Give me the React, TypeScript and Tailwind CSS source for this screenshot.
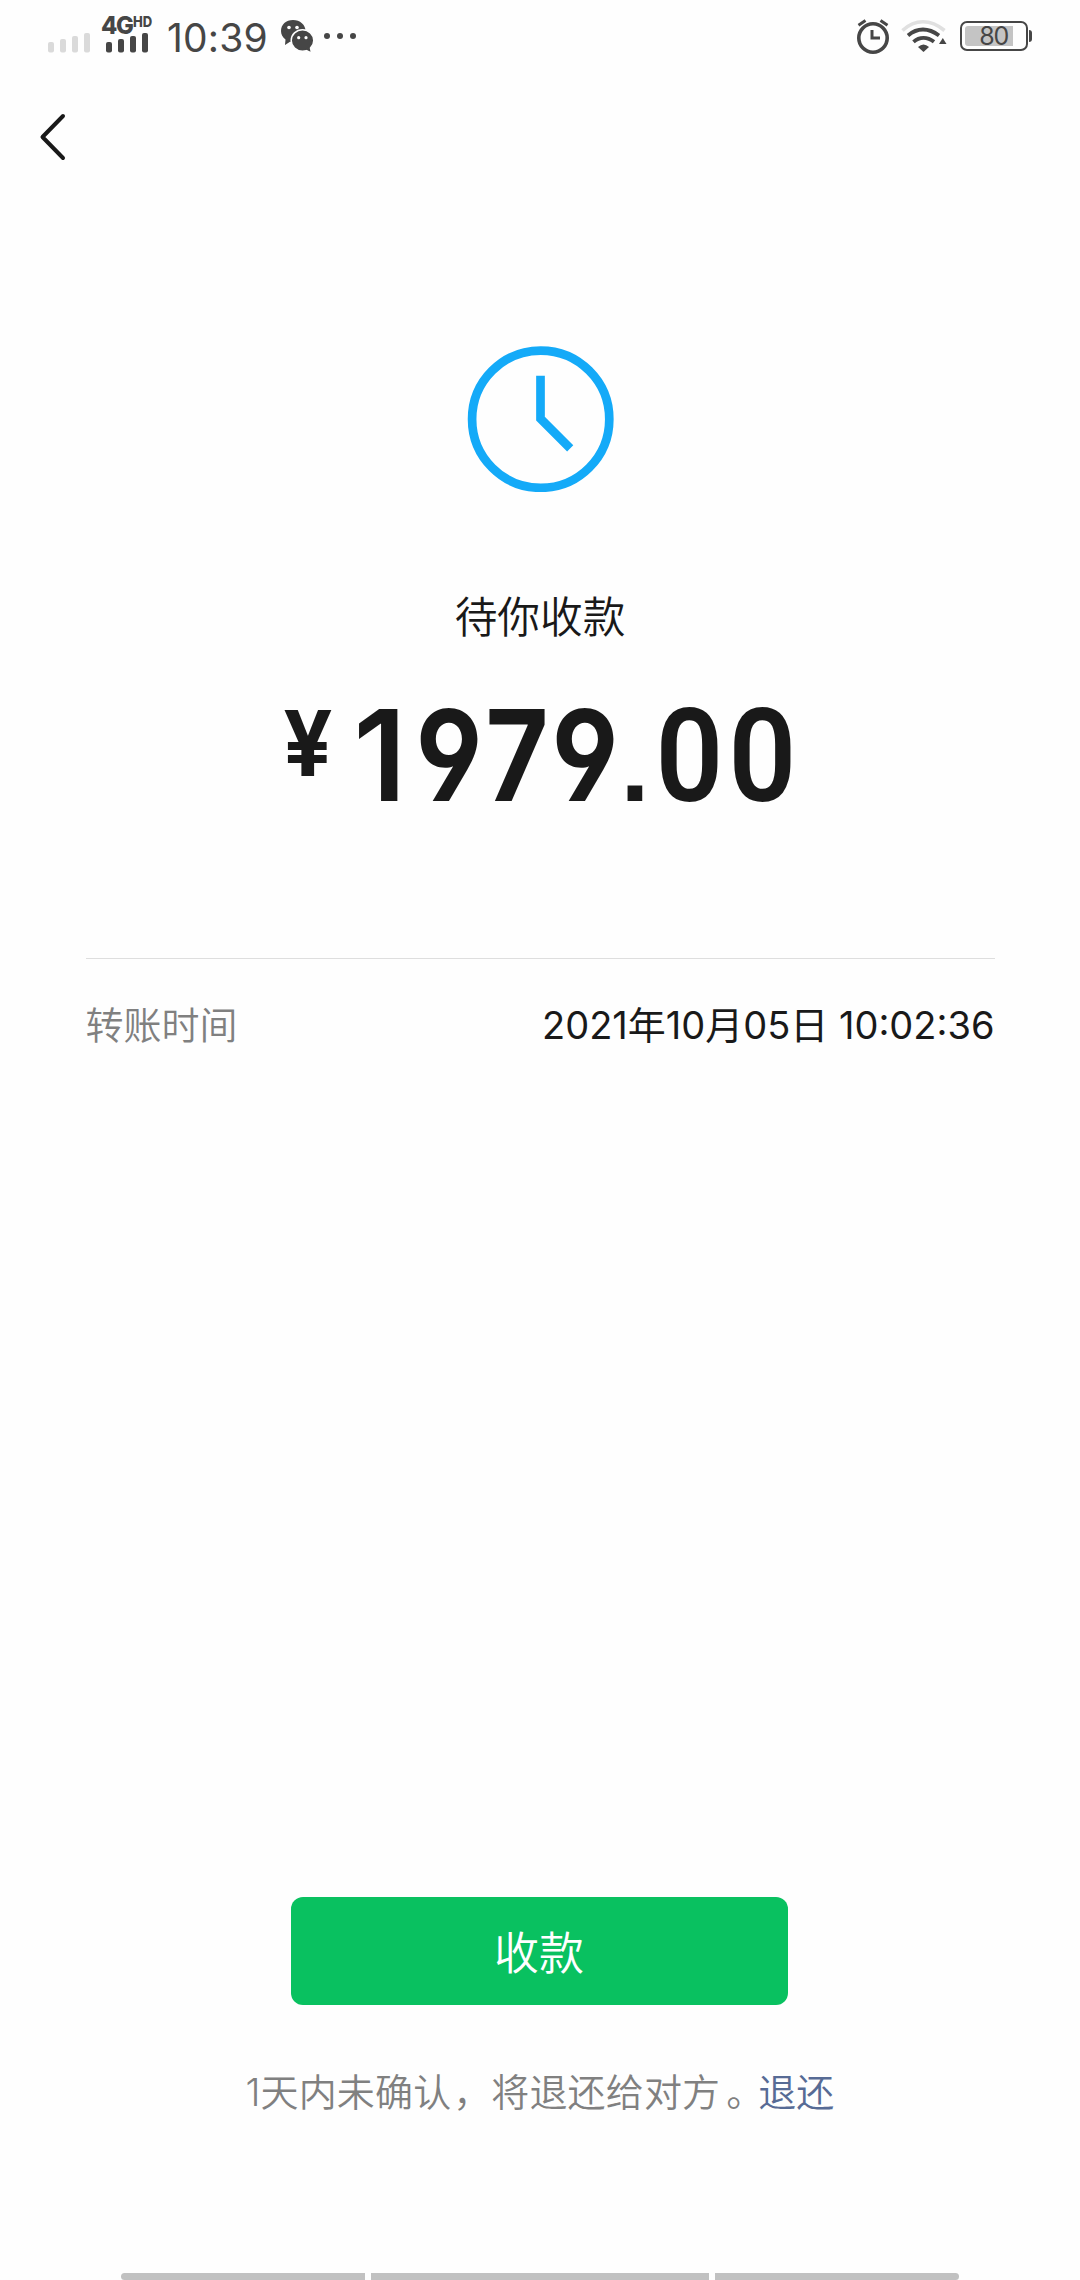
const SANS = "font-['Inter','Noto_Sans_CJK_SC',sans-serif]";

const SignalBars = ({ className }: { className: string }) => (
  <svg width="44" height="20" viewBox="0 0 44 20" className={className} fill="currentColor">
    <rect x="0" y="9" width="6" height="10.5" rx="2" />
    <rect x="12" y="6" width="6" height="13.5" rx="2" />
    <rect x="24" y="3" width="6" height="16.5" rx="2" />
    <rect x="36" y="0" width="6" height="19.5" rx="2" />
  </svg>
);

const WechatIcon = () => (
  <svg width="34" height="34" viewBox="0 0 34 34" className="ml-[13px] mt-[19px]">
    <path
      d="M13 1C6 1 1 5.600 1 12c0 3.600 1.700 6.400 4.500 8.500L5 26l5-3.200c1 .2 2 .3 3 .3 7 0 12.500-4.600 12.500-11S20 1 13 1z"
      fill="#464646"
    />
    <ellipse cx="22.500" cy="21.500" rx="11.300" ry="10.800" fill="#464646" stroke="#fefefe" strokeWidth="1.500" />
    <path d="M25 30l5.500 2.800-1-5z" fill="#464646" />
    <circle cx="9" cy="8.500" r="1.800" fill="#fefefe" />
    <circle cx="17" cy="8.500" r="1.800" fill="#fefefe" />
    <circle cx="18.700" cy="18.700" r="1.600" fill="#fefefe" />
    <circle cx="26" cy="18.700" r="1.600" fill="#fefefe" />
  </svg>
);

const AlarmIcon = () => (
  <svg width="34" height="36" viewBox="0 0 34 36" className="mt-[18px]" fill="none" stroke="#464646">
    <circle cx="17" cy="20" r="14.200" strokeWidth="3.600" />
    <path d="M16 12v8h8" strokeWidth="3" />
    <path d="M2.500 7.200l7-4.700M31.500 7.200l-7-4.700" strokeWidth="3" />
  </svg>
);

const WifiIcon = () => (
  <svg width="46" height="36" viewBox="0 0 46 36" className="ml-[11px] mt-[18px]" fill="none">
    <path d="M1.500 12.500Q11 3.800 22 3.800T43.500 12.500" stroke="#e0e0e0" strokeWidth="3.600" />
    <path d="M7 17.500Q14 11.500 22 11.500T38 17.500" stroke="#464646" strokeWidth="3.800" />
    <path d="M12.500 23.800Q17 19.800 22.500 19.800T33 23.800" stroke="#464646" strokeWidth="3.800" />
    <path d="M17 29Q22.500 24 28 29L22.500 34z" fill="#464646" />
    <path d="M38 26h7.500l-3.700-6z" fill="#464646" />
  </svg>
);

const StatusBar = () => (
  <div className="flex h-[74px] items-start pl-12 pr-[48px] text-[#464646]">
    <SignalBars className="mt-[33px] text-[#dadada]" />
    <div className="ml-[9px] mt-[14px] flex w-[61px] flex-col">
      <div className="flex h-[19px] items-start font-extrabold">
        <span className="w-[32px] origin-left scale-x-[0.95] text-[25px] leading-[23px] tracking-[-1.5px]">4G</span>
        <span className="origin-left scale-x-90 text-[14.500px] leading-[16px]">HD</span>
      </div>
      <SignalBars className="ml-[5px]" />
    </div>
    <span className="ml-[5px] mt-[14px] w-[100px] whitespace-nowrap text-[39px] leading-[48px] tracking-[0.2px]">10:39</span>
    <WechatIcon />
    <svg width="34" height="8" viewBox="0 0 34 8" className="ml-[9px] mt-[32px]" fill="currentColor">
      <circle cx="4" cy="4" r="3" />
      <circle cx="17" cy="4" r="3" />
      <circle cx="30" cy="4" r="3" />
    </svg>
    <div className="ml-auto flex items-start">
      <AlarmIcon />
      <WifiIcon />
      <div className="ml-[13px] mt-[21px] flex h-[30px] w-[68px] items-center rounded-[7px] border-2 border-[#464646] px-[3px]">
        <div className="flex h-5 w-12 items-center justify-end rounded-l-[3px] bg-[#c4c4c4] pr-[5px] text-[25px] leading-5 tracking-[-1.2px]">
          80
        </div>
      </div>
      <div className="ml-px mt-[30px] h-3 w-[3px] rounded-r-full bg-[#464646]" />
    </div>
  </div>
);

const ClockIcon = () => (
  <svg width="148" height="146" viewBox="0 0 148 146" fill="none" stroke="#14aaf8" strokeWidth="8.700">
    <circle cx="74.700" cy="73.200" r="68.600" />
    <path d="M74.500 29.700v43L104.200 102.300" />
  </svg>
);

// each glyph sits in its own cell, condensed to a DIN-like width
const DIGITS = [
  { char: "1", className: "w-[62px] -translate-x-[5px] font-semibold" },
  { char: "9", className: "w-[68px] -translate-x-px scale-x-[0.86] font-bold" },
  { char: "7", className: "w-[66px] scale-x-[0.86] font-bold" },
  { char: "9", className: "w-[70px] scale-x-[0.86] font-bold" },
  { char: ".", className: "w-[30px] font-['Liberation_Sans'] text-[104px] font-bold" },
  { char: "0", className: "w-[79px] scale-x-[0.92] font-['Roboto'] text-[129px] font-semibold" },
  { char: "0", className: "w-[67px] scale-x-[0.92] font-['Roboto'] text-[129px] font-semibold" },
];

const Amount = () => (
  <div className="flex h-[140px] w-[512px] items-baseline leading-[140px] text-[#191919]">
    <span className="flex w-12 -translate-y-[25px] scale-x-[0.95] justify-center text-[91px] font-bold">¥</span>
    <span className="ml-[22px] flex items-baseline text-[126px] [font-feature-settings:'cv04']">
      {DIGITS.map((d, i) => (
        <span key={i} className={`flex justify-center ${d.className}`}>
          {d.char}
        </span>
      ))}
    </span>
  </div>
);

const NavBar = () => (
  <div className="flex h-[7px] gap-[6px] pl-[121px]">
    <div className="w-[244px] rounded-l-[4px] bg-[#c1c1c1]" />
    <div className="w-[338px] bg-[#c1c1c1]" />
    <div className="w-[244px] rounded-r-[4px] bg-[#c1c1c1]" />
  </div>
);

export default function App() {
  return (
    <div className={`flex h-[2280px] w-[1080px] flex-col overflow-hidden bg-[#fefefe] ${SANS}`}>
      <StatusBar />
      <header className="h-[126px] pl-[38px] pt-[38px]">
        <svg width="30" height="50" viewBox="0 0 30 50" fill="none" stroke="#191919" strokeWidth="4" strokeLinecap="round" strokeLinejoin="round">
          <path d="M25 4L4.500 25 25 46" />
        </svg>
      </header>
      <main className="flex flex-1 flex-col items-center pt-[146px]">
        <ClockIcon />
        <h1 className="mt-[96px] text-[42.700px] font-[350] leading-[60px] text-[#191919]">待你收款</h1>
        <div className="mt-[37px]">
          <Amount />
        </div>
        <div className="mt-[133px] flex w-[909px] items-center justify-between border-t border-[#dedede] pt-[38px] text-[38px] font-[350] leading-[56px]">
          <span className="text-[#808080]">转账时间</span>
          <span className="font-[370] text-[#191919]">2021年10月05日 10:02:36</span>
        </div>
        <button type="button" className="mr-[2px] mt-auto h-[108px] w-[497px] rounded-[12px] bg-[#09c160] pt-[6px] text-[45px] font-[350] text-white">
          收款
        </button>
        <p className="mb-[153px] mt-[59px] flex text-[38px] font-[350] leading-[56px] tracking-[0.150px] text-[#808080]">
          <span>1天内未确认</span>
          <span className="w-[40px] pl-[2px]">，</span>
          <span>将退还给对方</span>
          <span className="w-[38px] indent-[6px]">。</span>
          <a className="text-[#576b95]">退还</a>
        </p>
      </main>
      <NavBar />
    </div>
  );
}
